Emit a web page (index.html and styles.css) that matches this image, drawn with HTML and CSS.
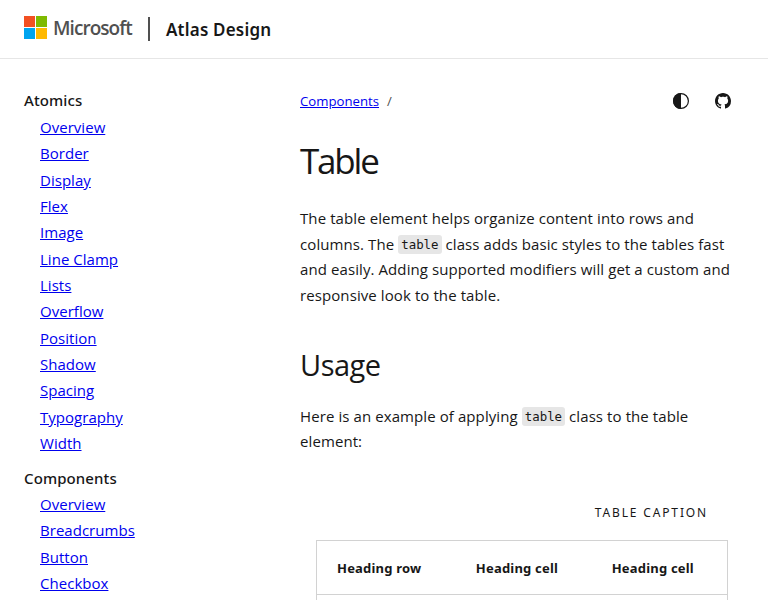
FILE: index.html
```
<!DOCTYPE html>
<html lang="en">
<head>
<meta charset="utf-8">
<title>Table - Atlas Design</title>
<link rel="stylesheet" href="styles.css">
</head>
<body>
<header class="site-header">
  <svg class="mark" viewBox="0 0 23 23" aria-hidden="true"><path fill="#f25022" d="M0 0h11v11H0z"/><path fill="#7fba00" d="M12 0h11v11H12z"/><path fill="#00a4ef" d="M0 12h11v11H0z"/><path fill="#ffb900" d="M12 12h11v11H12z"/></svg>
  <span class="wordmark">Microsoft</span>
  <span class="divider"></span>
  <span class="brand">Atlas Design</span>
</header>
<div class="layout">
  <nav class="sidebar">
    <h2>Atomics</h2>
    <ul>
      <li><a href="#">Overview</a></li>
      <li><a href="#">Border</a></li>
      <li><a href="#">Display</a></li>
      <li><a href="#">Flex</a></li>
      <li><a href="#">Image</a></li>
      <li><a href="#">Line Clamp</a></li>
      <li><a href="#">Lists</a></li>
      <li><a href="#">Overflow</a></li>
      <li><a href="#">Position</a></li>
      <li><a href="#">Shadow</a></li>
      <li><a href="#">Spacing</a></li>
      <li><a href="#">Typography</a></li>
      <li><a href="#">Width</a></li>
    </ul>
    <h2>Components</h2>
    <ul>
      <li><a href="#">Overview</a></li>
      <li><a href="#">Breadcrumbs</a></li>
      <li><a href="#">Button</a></li>
      <li><a href="#">Checkbox</a></li>
    </ul>
  </nav>
  <main class="content">
    <div class="topline">
      <div class="crumbs"><a href="#">Components</a><span>/</span></div>
      <div class="actions">
        <svg viewBox="0 0 16 16" aria-hidden="true"><circle cx="8" cy="8" r="7.4" fill="none" stroke="#171717" stroke-width="1.2"/><path fill="#171717" d="M8 0a8 8 0 0 0 0 16z"/></svg>
        <svg viewBox="0 0 16 16" aria-hidden="true"><path fill="#171717" d="M8 0C3.58 0 0 3.58 0 8c0 3.54 2.29 6.53 5.47 7.59.4.07.55-.17.55-.38 0-.19-.01-.82-.01-1.49-2.01.37-2.53-.49-2.69-.94-.09-.23-.48-.94-.82-1.13-.28-.15-.68-.52-.01-.53.63-.01 1.08.58 1.23.82.72 1.21 1.87.87 2.33.66.07-.52.28-.87.51-1.07-1.78-.2-3.64-.89-3.64-3.95 0-.87.31-1.59.82-2.15-.08-.2-.36-1.02.08-2.12 0 0 .67-.21 2.2.82.64-.18 1.32-.27 2-.27s1.36.09 2 .27c1.53-1.04 2.2-.82 2.2-.82.44 1.1.16 1.92.08 2.12.51.56.82 1.27.82 2.15 0 3.07-1.87 3.75-3.65 3.95.29.25.54.73.54 1.48 0 1.07-.01 1.93-.01 2.2 0 .21.15.46.55.38A8.01 8.01 0 0 0 16 8c0-4.42-3.58-8-8-8z"/></svg>
      </div>
    </div>
    <h1>Table</h1>
    <p class="intro">The table element helps organize content into rows and<br>columns. The <code>table</code> class adds basic styles to the tables fast<br>and easily. Adding supported modifiers will get a custom and<br>responsive look to the table.</p>
    <h2 class="section">Usage</h2>
    <p class="usage">Here is an example of applying <code>table</code> class to the table<br>element:</p>
    <div class="example">
      <table>
        <caption>Table caption</caption>
        <thead><tr><th>Heading row</th><th>Heading cell</th><th>Heading cell</th></tr></thead>
        <tbody><tr><td></td><td></td><td></td></tr></tbody>
      </table>
    </div>
  </main>
</div>
</body>
</html>
```
FILE: styles.css
```
* { box-sizing: border-box; }
html, body { height: 600px; overflow: hidden; }
body { margin: 0; background: #fff; color: #171717; font: 400 15px/1.6 "Open Sans", "Noto Sans", sans-serif; }
.site-header { height: 59px; display: flex; align-items: center; padding: 0 24px 3px; border-bottom: 1px solid #e6e6e6; }
.mark { width: 23px; height: 23px; }
.wordmark { margin-left: 6px; width: 79px; font: 600 19px/24px "Open Sans", sans-serif; letter-spacing: -.95px; color: #505050; white-space: nowrap; }
.divider { width: 2px; height: 24px; margin: 2px 0 0 16px; background: #505050; }
.brand { margin: 4px 0 0 16px; font-family: "Noto Sans", sans-serif; font-size: 17px; font-weight: 600; letter-spacing: .2px; white-space: nowrap; }
.layout { display: grid; grid-template-columns: 276px 432px; padding: 0 24px; height: 541px; overflow: hidden; }
.sidebar { padding-top: 28.4px; }
.sidebar h2 { margin: 0; font-family: "Noto Sans", sans-serif; font-size: 15px; line-height: 26.4px; font-weight: 550; letter-spacing: .1px; }
.sidebar ul { list-style: none; margin: 0 0 8.2px; padding: 0 0 0 16px; }
.sidebar li { height: 26.37px; line-height: 26.37px; white-space: nowrap; letter-spacing: .03px; }
a { color: #00e; text-decoration: underline; }
.content { padding-top: 30px; }
.topline { display: flex; justify-content: space-between; align-items: center; height: 24px; padding-right: 1px; font-size: 13.2px; }
.crumbs { padding-top: 2px; }
.crumbs span { margin-left: 8px; color: #505050; }
.actions { display: flex; gap: 26px; }
.actions svg { width: 16px; height: 16px; display: block; }
h1 { margin: 24px 0 0; font-size: 35px; line-height: 48px; font-weight: 400; letter-spacing: -2.2px; }
p { margin: 0; line-height: 25.6px; white-space: nowrap; letter-spacing: .09px; }
.intro { margin-top: 21px; }
.section { margin: 37px 0 0; font-size: 29px; line-height: 39px; font-weight: 400; letter-spacing: -.5px; }
.usage { margin-top: 19.4px; }
code { font: 12.4px/1 "DejaVu Sans Mono", monospace; letter-spacing: 0; padding: 2px 3px; background: #e6e6e6; border-radius: 3px; vertical-align: 1px; }
.example { margin-top: 47.6px; padding: 0 4px 0 16px; }
table { width: 412px; border-collapse: collapse; font-family: "Noto Sans", sans-serif; font-size: 13px; }
caption { padding: 0 20px 18px; text-align: right; font-size: 12px; line-height: 19px; letter-spacing: 1.85px; text-transform: uppercase; }
th, td { height: 54px; padding: 2px 0 0 20px; text-align: left; border-bottom: 1px solid #d2d2d2; }
th { width: 136px; font-weight: 700; letter-spacing: .2px; }
th:first-child { width: 139.5px; }
table tr { border: 1px solid #d2d2d2; }
```
